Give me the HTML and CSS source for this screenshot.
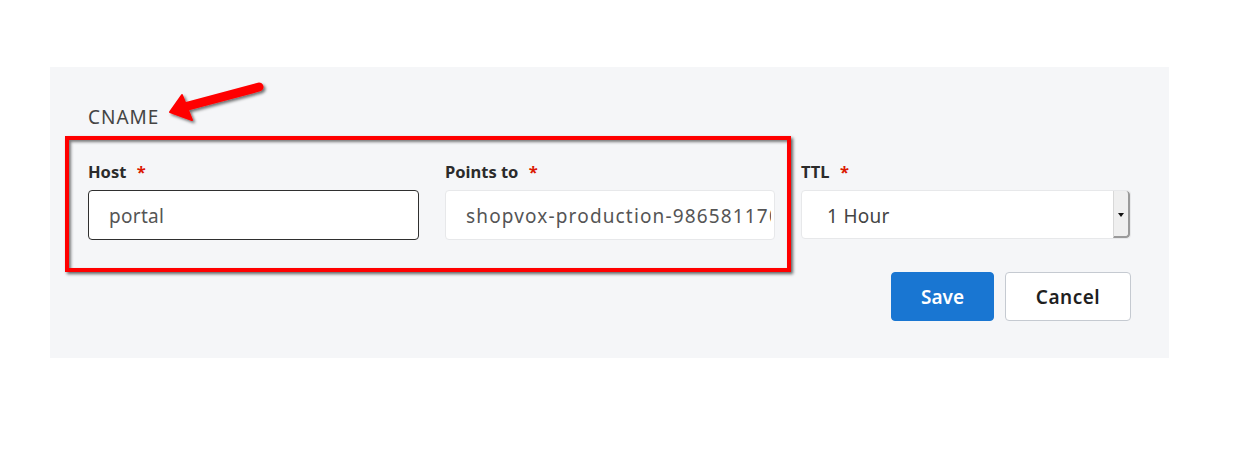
FILE: index.html
```html
<!DOCTYPE html>
<html>
<head>
<meta charset="utf-8">
<link rel="stylesheet" href="styles.css">
</head>
<body>
<div class="panel">
  <h2 class="title">CNAME</h2>
  <div class="fields">
    <div class="field">
      <div class="label">Host <span class="req">*</span></div>
      <div class="control focused"><span class="value">portal</span></div>
    </div>
    <div class="field">
      <div class="label">Points to <span class="req">*</span></div>
      <div class="control"><span class="value wide">shopvox-production-986581170.us-east-1.elb.amazonaws.com</span></div>
    </div>
    <div class="field">
      <div class="label">TTL <span class="req">*</span></div>
      <div class="control select"><span class="value">1 Hour</span><span class="caret"></span></div>
    </div>
  </div>
  <div class="actions">
    <button class="btn primary">Save</button>
    <button class="btn secondary">Cancel</button>
  </div>
  <div class="highlight"></div>
  <svg class="arrow" width="120" height="60" viewBox="0 0 120 60">
    <defs>
      <filter id="sh" x="-20%" y="-30%" width="150%" height="170%">
        <feDropShadow dx="2" dy="2" stdDeviation="1.5" flood-color="#000" flood-opacity="0.55"/>
      </filter>
    </defs>
    <g filter="url(#sh)" transform="translate(-160,-70)">
      <line x1="188" y1="106" x2="259" y2="87" stroke="#ff0000" stroke-width="9" stroke-linecap="round"/>
      <polygon points="170,112 182,95 192,120" fill="#ff0000" stroke="#ff0000" stroke-width="2" stroke-linejoin="round"/>
    </g>
  </svg>
</div>
</body>
</html>
```

FILE: styles.css
```css
* { box-sizing: border-box; }
html, body { margin: 0; padding: 0; background: #ffffff; }
body { font-family: "Noto Sans", "Open Sans", sans-serif; }

.panel {
  position: relative;
  margin: 67px 0 0 50px;
  width: 1119px;
  height: 291px;
  background: #f5f6f8;
  padding: 38px 38px 0 38px;
}

.title {
  margin: 0;
  font-size: 19px;
  line-height: 24px;
  font-weight: 400;
  color: #444444;
  letter-spacing: 1px;
}

.fields {
  display: grid;
  grid-template-columns: 331px 330px 330px;
  column-gap: 26px;
  margin-top: 32px;
}

.label {
  font-size: 16.5px;
  line-height: 22px;
  font-weight: 700;
  color: #2b2b2b;
  margin-bottom: 7px;
}
.req { color: #db1802; margin-left: 6px; font-weight: 700; }

.control {
  height: 50px;
  background: #ffffff;
  border: 1px solid #e7e8ea;
  border-radius: 4px;
  display: flex;
  align-items: center;
  padding: 0 3px 0 20px;
  overflow: hidden;
  font-size: 19px;
  color: #555555;
  white-space: nowrap;
  letter-spacing: 0.3px;
}
.control.focused { border-color: #2f2f2f; padding-left: 20px; }
.value { overflow: hidden; flex: 1; line-height: 26px; padding-top: 2px; }
.value.wide { letter-spacing: 1.15px; }

.control.select { padding: 0 0 0 25px; height: 49px; margin-top: 1px; }
.control.select .value { color: #444; }
.caret {
  width: 17px;
  align-self: stretch;
  background: #efefef;
  border-left: 1px solid #d8d8d8;
  border-right: 2px solid #9a9a9a;
  border-bottom: 2px solid #9a9a9a;
  border-radius: 0 4px 4px 0;
  position: relative;
}
.caret::after {
  content: "";
  position: absolute;
  left: 4px;
  top: 22px;
  border-left: 3.5px solid transparent;
  border-right: 3.5px solid transparent;
  border-top: 4px solid #111;
}

.actions {
  display: flex;
  justify-content: flex-end;
  gap: 11px;
  margin-top: 32px;
}
.btn {
  height: 49px;
  border-radius: 4px;
  font-family: "Noto Sans", "Open Sans", sans-serif;
  font-size: 19px;
  font-weight: 600;
  cursor: pointer;
  padding: 0;
}
.btn.primary {
  width: 103px;
  background: #1976d2;
  border: 1px solid #1976d2;
  color: #ffffff;
}
.btn.secondary {
  width: 126px;
  background: #ffffff;
  border: 1px solid #c5cad1;
  color: #1f1f1f;
  letter-spacing: 0.5px;
}

.highlight {
  position: absolute;
  left: 15px;
  top: 69px;
  width: 726px;
  height: 136px;
  border: 4px solid #ff0000;
  box-shadow: 2px 2px 3px rgba(0,0,0,0.6), inset 2px 2px 3px rgba(0,0,0,0.5);
  pointer-events: none;
}

.arrow {
  position: absolute;
  left: 110px;
  top: 3px;
  overflow: visible;
}
```
